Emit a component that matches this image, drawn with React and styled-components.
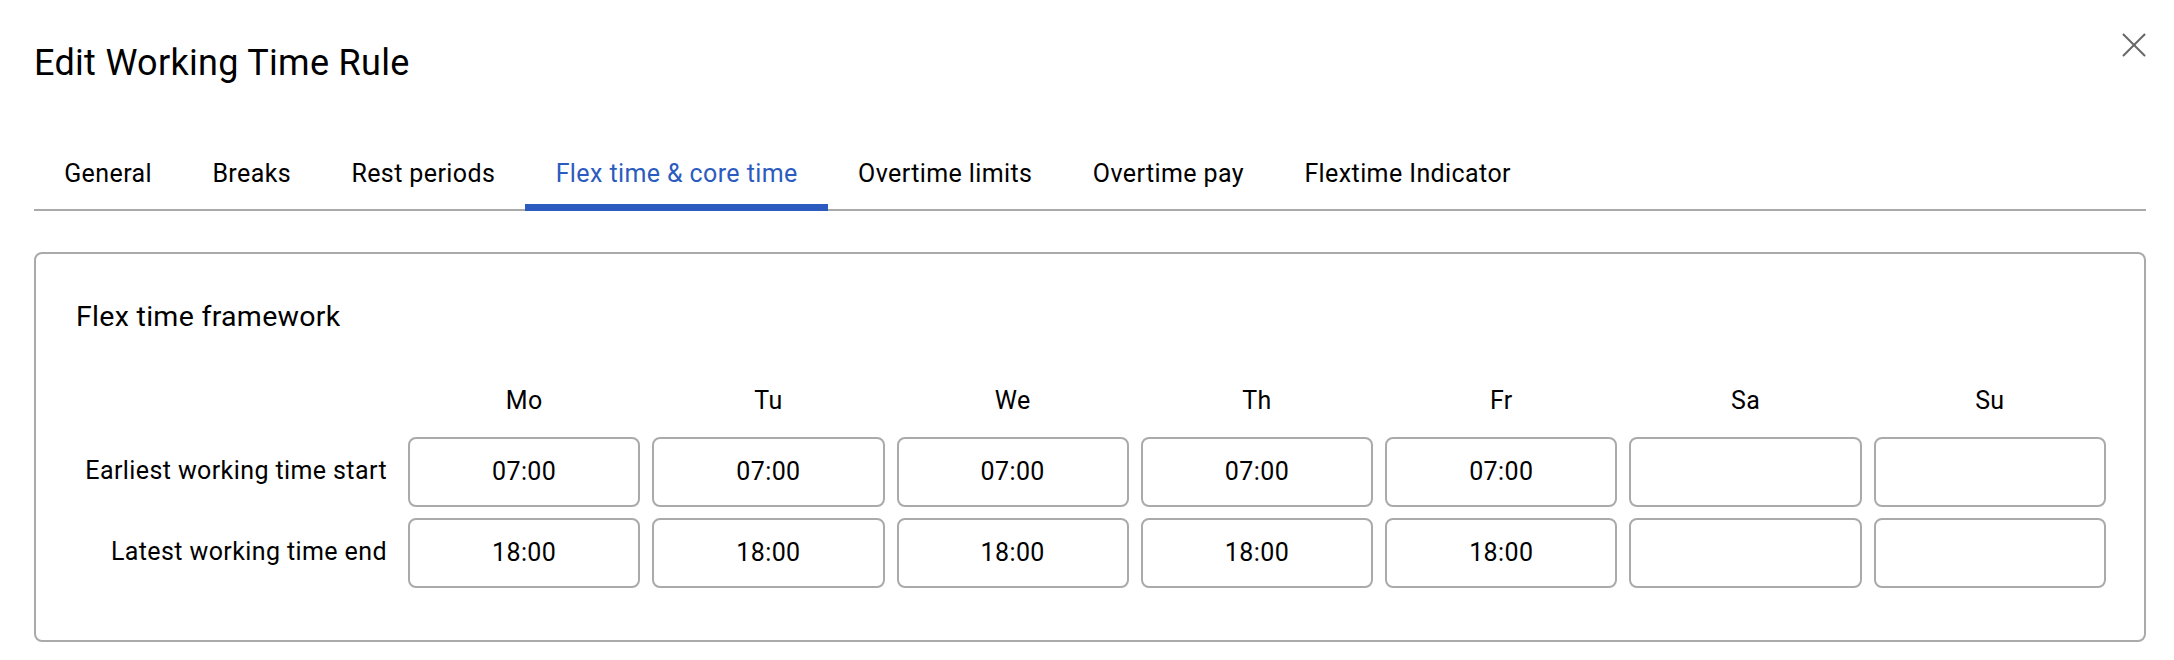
import React from "react";
import styled, { createGlobalStyle } from "styled-components";

const GlobalStyle = createGlobalStyle`
  html, body {
    margin: 0;
    padding: 0;
    background: #ffffff;
  }
  body {
    font-family: Roboto, "Liberation Sans", Arial, sans-serif;
    color: #000;
  }
`;

const Page = styled.div`
  padding: 33px 28px 0 34px;
`;

const Header = styled.div`
  display: flex;
  justify-content: space-between;
  align-items: flex-start;
`;

const Title = styled.h1`
  margin: 9px 0 0;
  font-size: 36px;
  font-weight: 400;
  line-height: 1.2;
  letter-spacing: 0.3px;
`;

const CloseButton = styled.button`
  width: 24px;
  height: 24px;
  padding: 0;
  border: 0;
  background: none;
  cursor: pointer;
  display: flex;

  svg {
    width: 24px;
    height: 24px;
  }
`;

const TabBar = styled.div`
  display: flex;
  margin-top: 74px;
  border-bottom: 2px solid #aaaaaa;
`;

const Tab = styled.div`
  padding: 1px 30.2px 15px;
  font-size: 25px;
  letter-spacing: 0.4px;
  line-height: 28.8px;
  white-space: nowrap;
  color: ${(p) => (p.$active ? "#2b5bbe" : "#000")};
  border-bottom: 7px solid ${(p) => (p.$active ? "#2c5bbf" : "transparent")};
  margin-bottom: -2px;
  cursor: pointer;
`;

const Panel = styled.section`
  margin-top: 41px;
  border: 2px solid #aaaaaa;
  border-radius: 8px;
  padding: 46.5px 38px 52px 40px;
`;

const PanelTitle = styled.h2`
  margin: 0;
  font-size: 28.5px;
  letter-spacing: 0.3px;
  font-weight: 400;
  line-height: 33.6px;
`;

const Grid = styled.div`
  margin-top: 53px;
  display: grid;
  grid-template-columns: 320px repeat(7, 1fr);
  column-gap: 12px;
  row-gap: 11px;
  align-items: center;
`;

const DayHead = styled.div`
  text-align: center;
  font-size: 25px;
  letter-spacing: 0.4px;
  line-height: 28.8px;
  padding-bottom: 10px;
`;

const RowLabel = styled.div`
  text-align: right;
  padding-right: 9px;
  font-size: 25px;
  letter-spacing: 0.4px;
  line-height: 28.8px;
  white-space: nowrap;
`;

const TimeInput = styled.input`
  box-sizing: border-box;
  width: 100%;
  height: 70px;
  border: 2px solid #aaaaaa;
  border-radius: 8px;
  background: #fff;
  font-family: Roboto, "Liberation Sans", Arial, sans-serif;
  font-size: 25px;
  letter-spacing: 0.4px;
  color: #000;
  text-align: center;
  outline: none;
  padding: 0;
`;

const days = ["Mo", "Tu", "We", "Th", "Fr", "Sa", "Su"];
const tabs = [
  "General",
  "Breaks",
  "Rest periods",
  "Flex time & core time",
  "Overtime limits",
  "Overtime pay",
  "Flextime Indicator",
];

const rows = [
  { label: "Earliest working time start", values: ["07:00", "07:00", "07:00", "07:00", "07:00", "", ""] },
  { label: "Latest working time end", values: ["18:00", "18:00", "18:00", "18:00", "18:00", "", ""] },
];

const CloseIcon = () => (
  <svg viewBox="0 0 24 24" fill="none" stroke="#666" strokeWidth="2" strokeLinecap="round">
    <line x1="1.5" y1="1.5" x2="22.5" y2="22.5" />
    <line x1="22.5" y1="1.5" x2="1.5" y2="22.5" />
  </svg>
);

const App = () => {
  return (
    <Page>
      <GlobalStyle />
      <Header>
        <Title>Edit Working Time Rule</Title>
        <CloseButton aria-label="Close">
          <CloseIcon />
        </CloseButton>
      </Header>

      <TabBar>
        {tabs.map((t) => (
          <Tab key={t} $active={t === "Flex time & core time"}>
            {t}
          </Tab>
        ))}
      </TabBar>

      <Panel>
        <PanelTitle>Flex time framework</PanelTitle>
        <Grid>
          <div />
          {days.map((d) => (
            <DayHead key={d}>{d}</DayHead>
          ))}
          {rows.map((r) => (
            <React.Fragment key={r.label}>
              <RowLabel>{r.label}</RowLabel>
              {r.values.map((v, i) => (
                <TimeInput key={days[i]} readOnly value={v} />
              ))}
            </React.Fragment>
          ))}
        </Grid>
      </Panel>
    </Page>
  );
};

export default App;
